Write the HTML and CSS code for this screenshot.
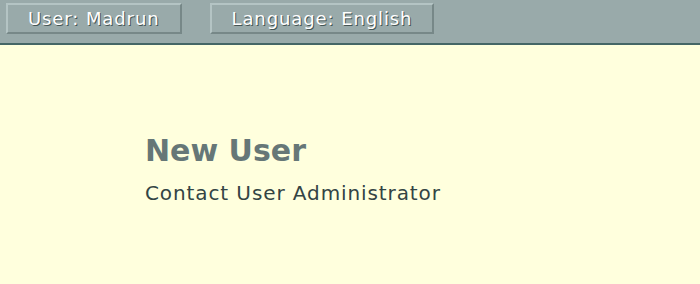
FILE: index.html
```html
<!DOCTYPE html>
<html lang="en">
<head>
  <meta charset="UTF-8">
  <title>New User</title>
  <link rel="stylesheet" href="styles.css">
</head>
<body>

  <!-- Top bar -->
  <header class="topbar">
    <button class="bar-btn">User: Madrun</button>
    <button class="bar-btn">Language: English</button>
  </header>

  <!-- Message -->
  <main class="content">
    <h1>New User</h1>
    <p>Contact User Administrator</p>
  </main>

</body>
</html>
```

FILE: styles.css
```css
* {
  margin: 0;
  padding: 0;
  box-sizing: border-box;
}

body {
  font-family: 'DejaVu Sans', Verdana, sans-serif;
  background-color: #ffffdd;
  min-height: 100vh;
}

.topbar {
  background-color: #99aaaa;
  border-bottom: 2px solid #446666;
  height: 45px;
  display: flex;
  align-items: flex-start;
  gap: 28px;
  padding: 3px 0 0 6px;
}

.bar-btn {
  font-family: inherit;
  font-size: 18px;
  letter-spacing: 0.9px;
  color: #ffffff;
  text-shadow: 1px 1px 0 #445555;
  background-color: #99aaaa;
  border: 2px solid;
  border-color: #b4c4c4 #778888 #778888 #b4c4c4;
  height: 31px;
  padding: 0 20px 1px;
  cursor: pointer;
}

.content {
  padding: 88px 0 0 145px;
}

.content h1 {
  font-size: 30px;
  color: #667777;
  margin-bottom: 13px;
}

.content p {
  font-size: 20px;
  letter-spacing: 0.9px;
  color: #334444;
}
```
